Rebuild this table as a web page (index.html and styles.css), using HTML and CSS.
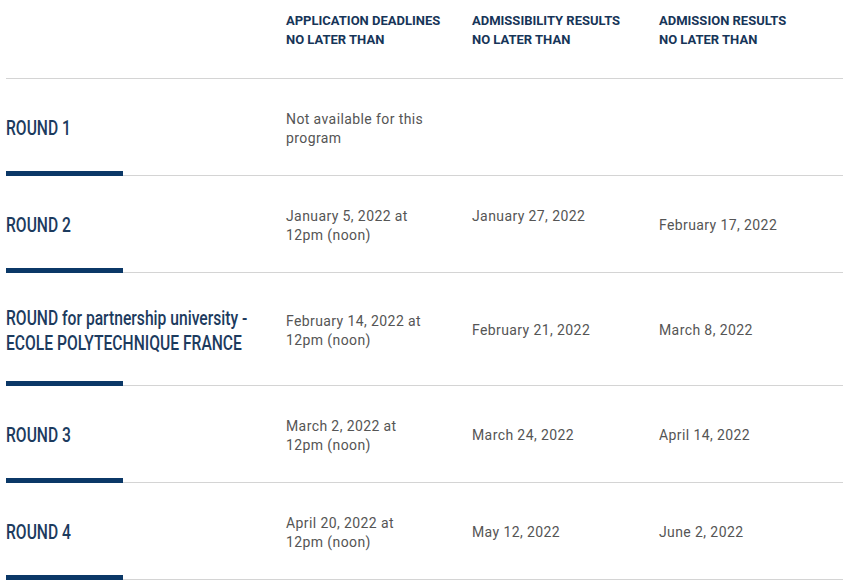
FILE: index.html
```html
<!DOCTYPE html>
<html lang="en">
<head>
<meta charset="utf-8">
<title>Rounds</title>
<link rel="stylesheet" href="styles.css">
</head>
<body>
<div class="table">
  <div class="head">
    <div class="h-cell"></div>
    <div class="h-cell">APPLICATION DEADLINES<br>NO LATER THAN</div>
    <div class="h-cell">ADMISSIBILITY RESULTS<br>NO LATER THAN</div>
    <div class="h-cell">ADMISSION RESULTS<br>NO LATER THAN</div>
  </div>
  <div class="row">
    <div class="title"><span class="t">ROUND 1</span></div>
    <div class="cell">Not available for this<br>program</div>
    <div class="cell"></div>
    <div class="cell"></div>
  </div>
  <div class="row">
    <div class="title"><span class="t">ROUND 2</span></div>
    <div class="cell">January 5, 2022 at<br>12pm (noon)</div>
    <div class="cell">January 27, 2022<br>&nbsp;</div>
    <div class="cell">February 17, 2022</div>
  </div>
  <div class="row row-tall">
    <div class="title"><span class="t">ROUND for partnership university -<br>ECOLE POLYTECHNIQUE FRANCE</span></div>
    <div class="cell">February 14, 2022 at<br>12pm (noon)</div>
    <div class="cell">February 21, 2022</div>
    <div class="cell">March 8, 2022</div>
  </div>
  <div class="row">
    <div class="title"><span class="t">ROUND 3</span></div>
    <div class="cell">March 2, 2022 at<br>12pm (noon)</div>
    <div class="cell">March 24, 2022</div>
    <div class="cell">April 14, 2022</div>
  </div>
  <div class="row">
    <div class="title"><span class="t">ROUND 4</span></div>
    <div class="cell">April 20, 2022 at<br>12pm (noon)</div>
    <div class="cell">May 12, 2022</div>
    <div class="cell">June 2, 2022</div>
  </div>
</div>
</body>
</html>
```

FILE: styles.css
```css
html, body {
  margin: 0;
  padding: 0;
  background: #ffffff;
}

body {
  padding: 0 6px;
  font-family: Roboto, "Liberation Sans", sans-serif;
}

.table {
  display: flex;
  flex-direction: column;
}

.head {
  display: grid;
  grid-template-columns: 280px 186px 187px 1fr;
  padding: 11px 0 29px;
  border-bottom: 1px solid #d4d4d4;
}

.h-cell {
  font-size: 13px;
  font-weight: 700;
  line-height: 19px;
  color: #163558;
}

.row {
  position: relative;
  box-sizing: border-box;
  display: grid;
  grid-template-columns: 280px 186px 187px 1fr;
  align-items: center;
  min-height: 97px;
  padding-top: 3px;
  border-bottom: 1px solid #d4d4d4;
}

.row::after {
  content: "";
  position: absolute;
  left: 0;
  bottom: -1px;
  width: 117px;
  height: 5px;
  background: #0b3867;
}

.row-tall {
  min-height: 113px;
}

.title {
  font-size: 21px;
  font-weight: 500;
  line-height: 24.5px;
  color: #1c3b5e;
  white-space: nowrap;
}

.t {
  display: inline-block;
  transform: scaleX(0.745);
  transform-origin: left center;
}

.cell {
  font-size: 14px;
  line-height: 18.5px;
  letter-spacing: 0.4px;
  color: #555555;
}
```
